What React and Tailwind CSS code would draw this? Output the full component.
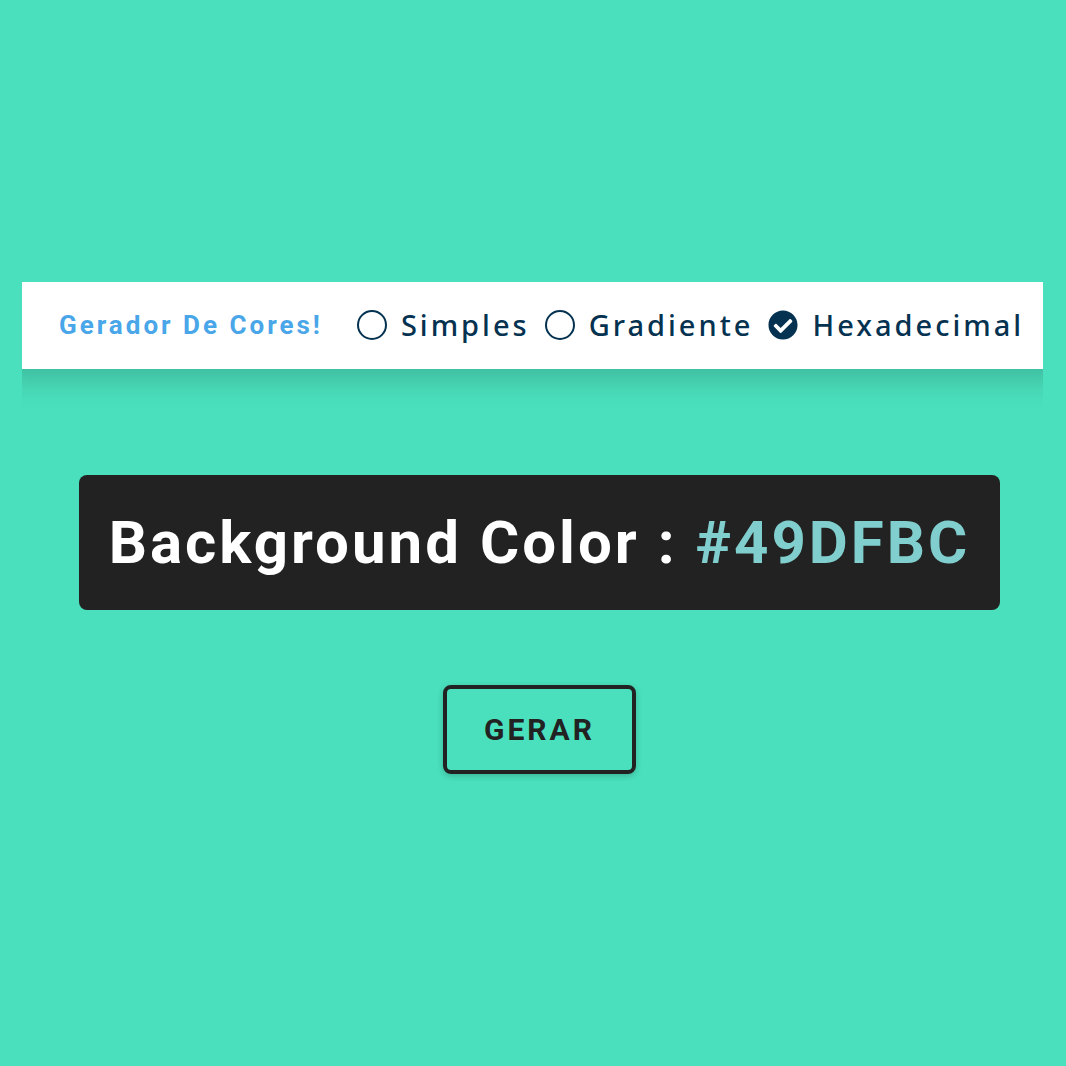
import { FaCheckCircle } from "react-icons/fa";

const modes = [
  { id: "simples", label: "Simples" },
  { id: "gradiente", label: "Gradiente" },
  { id: "hexadecimal", label: "Hexadecimal" },
];

function ModeOption({ id, label }) {
  return (
    <label htmlFor={id} className="flex cursor-pointer items-center">
      <input
        id={id}
        type="radio"
        name="mode"
        value={id}
        defaultChecked={id === "hexadecimal"}
        className="peer sr-only"
      />
      <span className="size-[30px] rounded-full border-2 border-[#053250] peer-checked:hidden" />
      <FaCheckCircle className="hidden size-[30px] text-[#053250] peer-checked:block" aria-hidden="true" />
      <span className="ml-[14px] font-['Noto_Sans',sans-serif] text-[29px] leading-10 font-medium tracking-[3px] text-[#053250]">
        {label}
      </span>
    </label>
  );
}

export default function App() {
  return (
    <div className="min-h-screen bg-[#4ae0bd] font-[Roboto,sans-serif]">
      <div className="pt-[282px] pr-[23px] pl-[22px]">
        <nav className="flex h-[87px] items-center bg-white pl-[37px] shadow-[0_-20px_30px_28px_rgba(0,0,0,0.2)] [clip-path:inset(0_0_-40px_0)]">
          <h4 className="text-[26px] font-bold tracking-[3px] whitespace-nowrap text-[#49a6e9]">Gerador De Cores!</h4>
          <div className="ml-[34px] flex items-center gap-[15px] pb-[2px]">
            {modes.map((mode) => (
              <ModeOption key={mode.id} {...mode} />
            ))}
          </div>
        </nav>
      </div>
      <main className="flex flex-col items-center pt-[106px] pl-[13px]">
        <h2 className="rounded-lg bg-[#222] px-[30px] py-[30px] text-[60px] leading-[75px] font-bold tracking-[3px] whitespace-nowrap text-white">
          Background Color : <span className="text-[#80cece]">#49DFBC</span>
        </h2>
        <button
          type="button"
          className="mt-[75px] rounded-lg border-4 border-[#222] px-[37px] py-5 text-[30px] leading-[41px] font-bold tracking-[3px] text-[#222] shadow-[0_2px_6px_rgba(0,0,0,0.2)]"
        >
          GERAR
        </button>
      </main>
    </div>
  );
}
